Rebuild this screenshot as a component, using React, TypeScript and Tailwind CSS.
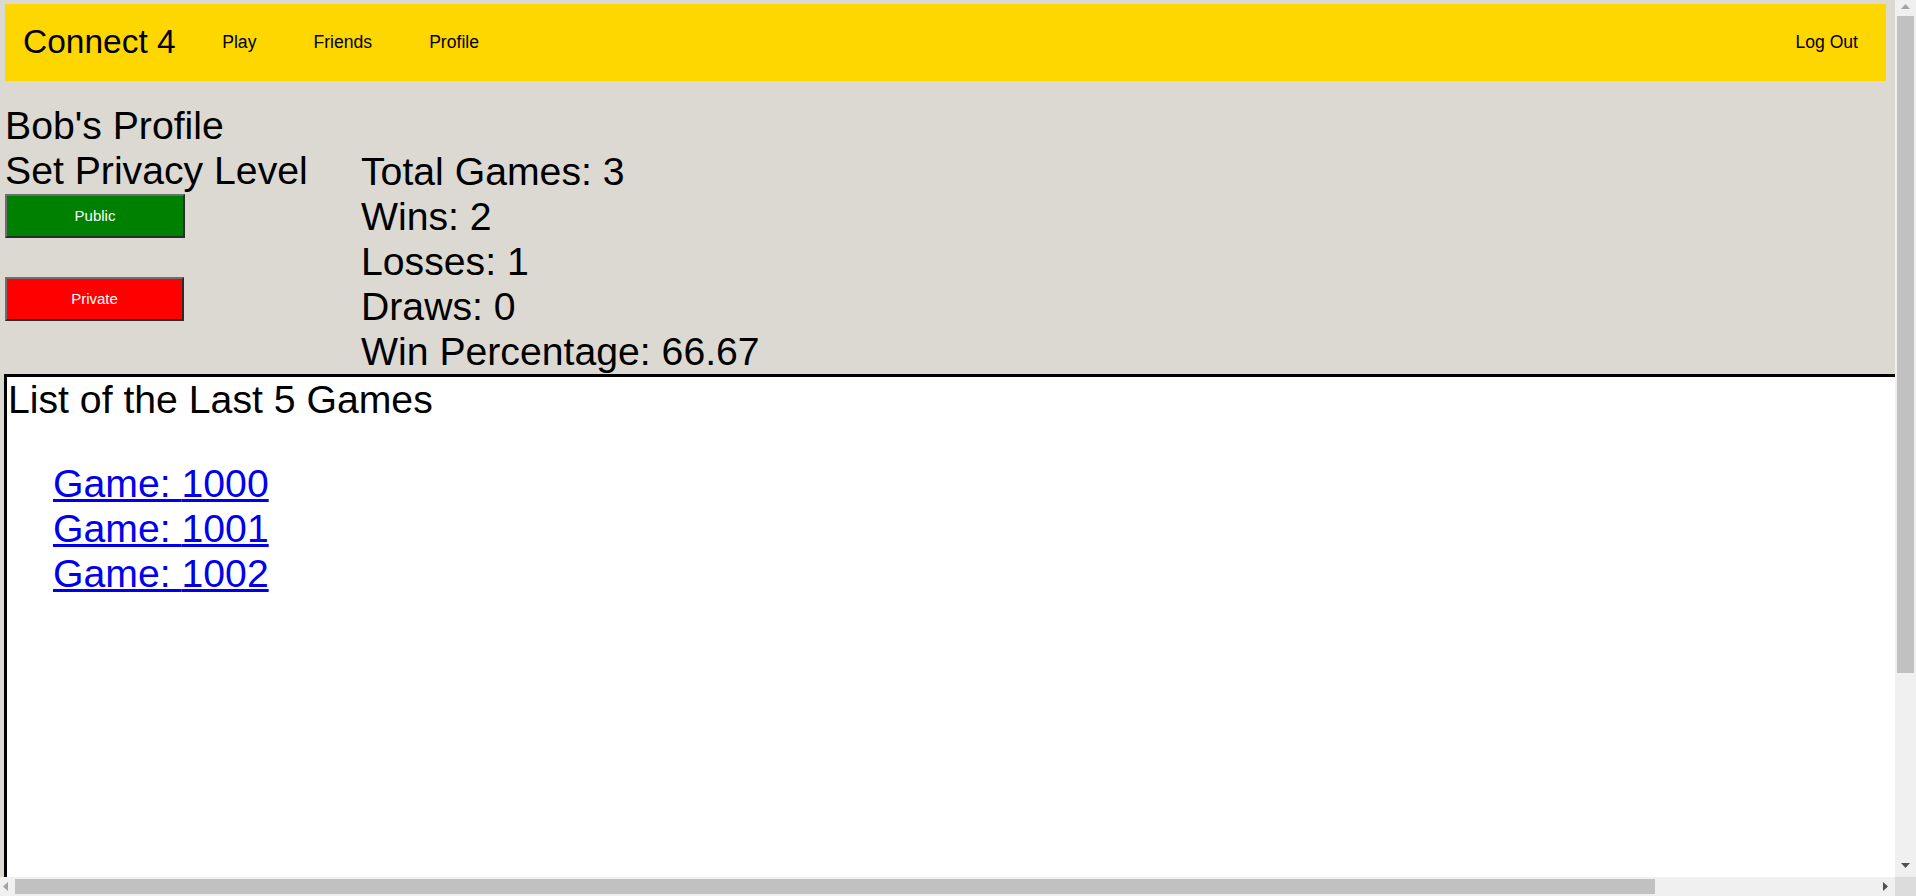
import React from 'react'

const links = ['Play', 'Friends', 'Profile']
const stats = [
  'Total Games: 3',
  'Wins: 2',
  'Losses: 1',
  'Draws: 0',
  'Win Percentage: 66.67',
]
const games = [1000, 1001, 1002]

function Arrow({ dir, color }: { dir: 'up' | 'down' | 'left' | 'right'; color: string }) {
  const vertical = dir === 'up' || dir === 'down'
  const points =
    dir === 'up'
      ? '0,5 4.5,0 9,5'
      : dir === 'down'
        ? '0,0 9,0 4.5,5'
        : dir === 'left'
          ? '5,0 5,9 0,4.5'
          : '0,0 0,9 5,4.5'
  return (
    <svg width={vertical ? 9 : 5} height={vertical ? 5 : 9} viewBox={vertical ? '0 0 9 5' : '0 0 5 9'}>
      <polygon points={points} fill={color} />
    </svg>
  )
}

function PrivacyButton({ label, color, width }: { label: string; color: string; width: string }) {
  return (
    <button
      type="button"
      className={`${color} ${width} h-[44px] border-2 border-t-[#6e6e6e] border-l-[#6e6e6e] border-b-[#2b2b2b] border-r-[#2b2b2b] text-[15px] text-white`}
    >
      {label}
    </button>
  )
}

export default function App() {
  return (
    <div className="flex h-screen w-screen flex-col overflow-hidden bg-[#f0f0f0] font-['Liberation_Sans',Arial,sans-serif] text-black">
      <div className="flex min-h-0 flex-1">
        {/* page */}
        <div className="min-w-0 flex-1 overflow-hidden bg-[#dcd9d3]">
          <nav className="ml-[5px] mt-[4px] flex h-[77px] w-[1881px] items-center bg-[#ffd700]">
            <span className="pl-[18px] pr-[18px] text-[33.5px]">Connect 4</span>
            {links.map((l) => (
              <a key={l} className="px-[28.5px] text-[17.6px]">
                {l}
              </a>
            ))}
            <a className="ml-auto px-[28px] text-[17.6px]">Log Out</a>
          </nav>

          <div className="pl-[5px] pt-[23px]">
            <h1 className="text-[39.2px] leading-[44px]">Bob's Profile</h1>
            <div className="flex h-[226px]">
              <div className="flex w-[356px] flex-col items-start">
                <h2 className="text-[39.2px] leading-[45px]">Set Privacy Level</h2>
                <div className="mt-[1px]">
                  <PrivacyButton label="Public" color="bg-[#008000]" width="w-[180px]" />
                </div>
                <div className="mt-[39px]">
                  <PrivacyButton label="Private" color="bg-[#ff0000]" width="w-[179px]" />
                </div>
              </div>
              <div className="mt-[1px] flex flex-col">
                {stats.map((s) => (
                  <div key={s} className="text-[39.2px] leading-[45px]">
                    {s}
                  </div>
                ))}
              </div>
            </div>
          </div>

          <div className="ml-[4px] h-[900px] w-[2140px] border-[3px] border-black bg-white">
            <h3 className="pl-[1px] text-[39.2px] leading-[46px]">List of the Last 5 Games</h3>
            <ul className="mt-[38px] pl-[46px]">
              {games.map((g) => (
                <li key={g} className="text-[39.2px] leading-[45px]">
                  <a href="#" className="text-[#0000ee] underline">
                    Game: {g}
                  </a>
                </li>
              ))}
            </ul>
          </div>
        </div>

        {/* vertical scrollbar */}
        <div className="flex w-[21px] flex-col bg-[#f0f0f0]">
          <div className="flex h-[16px] justify-center pt-[4px]">
            <Arrow dir="up" color="#a3a3a3" />
          </div>
          <div className="mx-[2px] h-[657px] bg-[#c1c1c1]" />
          <div className="flex-1" />
          <div className="flex h-[16px] justify-center pt-[2px]">
            <Arrow dir="down" color="#505050" />
          </div>
        </div>
      </div>

      {/* horizontal scrollbar */}
      <div className="flex h-[19px]">
        <div className="flex flex-1 bg-[#f0f0f0]">
          <div className="flex w-[15px] items-center pl-[3px]">
            <Arrow dir="left" color="#a3a3a3" />
          </div>
          <div className="my-[2px] w-[1640px] bg-[#c1c1c1]" />
          <div className="flex-1" />
          <div className="flex w-[15px] items-center pl-[3px]">
            <Arrow dir="right" color="#505050" />
          </div>
        </div>
        <div className="w-[21px] bg-[#dcdcdc]" />
      </div>
    </div>
  )
}
